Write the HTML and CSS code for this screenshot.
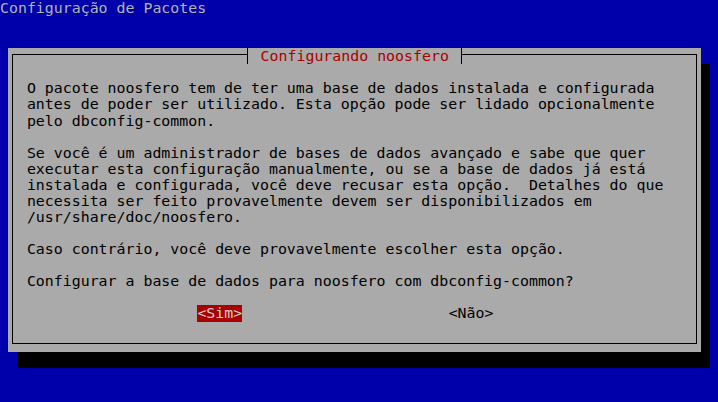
FILE: index.html
```html
<!DOCTYPE html>
<html lang="pt">
<head>
<meta charset="utf-8">
<title>Configuração de Pacotes</title>
<link rel="stylesheet" href="styles.css">
</head>
<body>
<div class="screen">
  <div class="header">Configuração de Pacotes</div>
  <div class="dialog">
    <div class="frame">
      <div class="title-row"><span class="title">Configurando noosfero</span></div>
      <div class="content">
        <p class="para">O pacote noosfero tem de ter uma base de dados instalada e configurada<br>antes de poder ser utilizado. Esta opção pode ser lidado opcionalmente<br>pelo dbconfig-common.</p>
        <p class="para">Se você é um administrador de bases de dados avançado e sabe que quer<br>executar esta configuração manualmente, ou se a base de dados já está<br>instalada e configurada, você deve recusar esta opção.  Detalhes do que<br>necessita ser feito provavelmente devem ser disponibilizados em<br>/usr/share/doc/noosfero.</p>
        <p class="para">Caso contrário, você deve provavelmente escolher esta opção.</p>
        <p class="para">Configurar a base de dados para noosfero com dbconfig-common?</p>
        <div class="buttons"><span class="btn btn-active">&lt;Sim&gt;</span><span class="btn btn-no">&lt;Não&gt;</span></div>
      </div>
    </div>
  </div>
</div>
</body>
</html>
```
FILE: styles.css
```css
:root {
  --cw: 8.975px;
  --lh: 16.08px;
  --blue: #0000aa;
  --gray: #aaaaaa;
  --red: #aa0000;
}

html, body {
  margin: 0;
  padding: 0;
}

body {
  width: 718px;
  height: 402px;
  overflow: hidden;
  background: var(--blue);
  font-family: "DejaVu Sans Mono", "Liberation Mono", monospace;
  font-size: 14.9px;
  line-height: var(--lh);
}

.screen {
  display: flex;
  flex-direction: column;
}

.header {
  height: var(--lh);
  color: #b4b4b4;
  white-space: pre;
}

.dialog {
  margin-top: 31.92px;
  margin-left: 8px;
  width: 693px;
  height: 304px;
  box-sizing: border-box;
  padding: 6px 4px 8px 4px;
  background: var(--gray);
  box-shadow: 9px 16px 0 #000;
}

.frame {
  height: 100%;
  box-sizing: border-box;
  border: 1px solid #000;
  display: flex;
  flex-direction: column;
}

.title-row {
  margin-top: -7px;
  height: 16px;
  display: flex;
  justify-content: center;
}

.title {
  background: var(--gray);
  border-left: 1px solid #000;
  border-right: 1px solid #000;
  padding: 0 12.5px 0 13px;
  color: var(--red);
  line-height: 16px;
  white-space: pre;
}

.content {
  margin-top: 16.4px;
  padding-left: 13.9px;
  color: #000;
}

.para {
  margin: 0 0 var(--lh) 0;
  white-space: pre;
}

.buttons {
  display: flex;
  padding-left: calc(var(--cw) * 19);
  height: var(--lh);
}

.btn {
  white-space: pre;
}

.btn-active {
  background: var(--red);
  color: #d2d2d2;
}

.btn-no {
  margin-left: calc(var(--cw) * 23);
  color: #000;
}
```
